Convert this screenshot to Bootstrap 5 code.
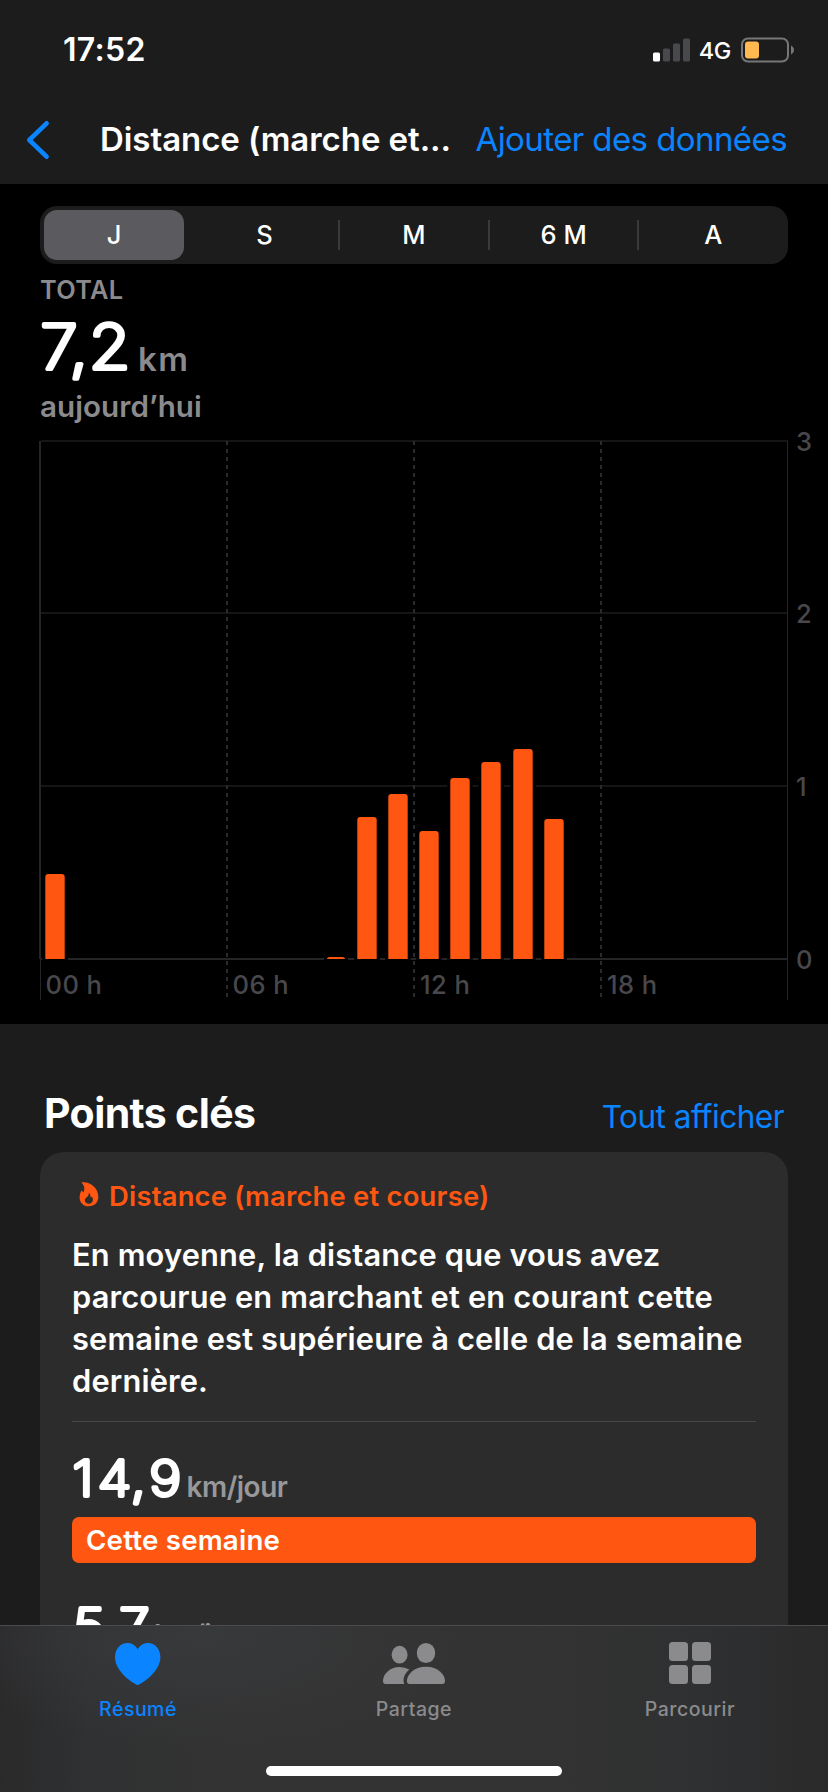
<!DOCTYPE html>
<html lang="fr" data-bs-theme="dark">
<head>
<meta charset="utf-8">
<meta name="viewport" content="width=device-width, initial-scale=1">
<title>Distance (marche et course)</title>
<link href="https://cdn.jsdelivr.net/npm/bootstrap@5.3.0/dist/css/bootstrap.min.css" rel="stylesheet">
<style>
  body { font-family: Inter, "Liberation Sans", sans-serif; background: #1c1c1c; color: #fff; }
  svg { display: block; flex: none; }
  .phone { height: 1792px; }
  .ios-blue { color: #0a84ff; }
  .ios-grey { color: #8b8b8d; }
  .semi { font-weight: 600; }
  .status-row { height: 99px; padding: 0 33px 0 63px; }
  .clock { font-size: 32px; font-weight: 600; letter-spacing: .3px; }
  .network { font-size: 23.5px; font-weight: 500; letter-spacing: -.4px; margin: 2px 10px 0 8px; }
  .title-row { height: 85px; padding: 0 41px 3px 26px; font-size: 33px; }
  .page-title { margin-left: 50px; letter-spacing: -.06px; }
  .add-link { letter-spacing: -.58px; }
  .chart-panel { background: #000; padding-top: 22px; }
  .segments { height: 58px; margin: 0 40px; padding: 4px 0; border-radius: 17px; background: #1c1c1c; font-size: 25.5px; font-weight: 500; }
  .segment { flex: 1 1 0; position: relative; }
  .segment.chosen { flex: 0 0 140px; margin: 0 5.6px 0 4px; border-radius: 13px; background: #5b5a5f; }
  .segment.split::before { content: ""; position: absolute; left: -1px; top: 10px; width: 2px; height: 30px; background: #3a3a3d; }
  .total-label { font-size: 25.3px; line-height: 30px; margin: 11px 0 0 40px; letter-spacing: .35px; }
  .day-label { font-size: 29.6px; line-height: 34px; margin-left: 40px; letter-spacing: .05px; }
  .figure-text { fill: #fff; stroke: #fff; font-weight: 200; stroke-linejoin: round; stroke-linecap: round; text-anchor: middle; }
  .unit { font-weight: 600; }
  .axis { fill: #48484c; font-size: 25.5px; font-weight: 500; letter-spacing: .45px; }
  .section-head { padding: 64px 44px 0 44px; height: 128px; }
  .section-head h2 { font-size: 41px; font-weight: 700; line-height: 50px; letter-spacing: -.61px; margin: 0; }
  .section-head a { font-size: 31.5px; letter-spacing: -.5px; }
  .insight { background: #2c2c2c; border-radius: 24px; margin: 0 40px; padding: 28px 32px 0; height: 680px; }
  .insight-title { color: #ff5711; font-size: 27.4px; line-height: 32px; letter-spacing: .22px; }
  .insight-text { font-size: 30.8px; line-height: 42.1px; letter-spacing: .16px; margin: 22px 0 18.6px; white-space: nowrap; }
  .rule { height: 1px; background: #48484b; }
  .week-bar { height: 46px; border-radius: 7px; background: #ff5711; font-size: 27.7px; letter-spacing: .2px; padding-left: 14px; line-height: 47px; }
  .tabs { height: 167px; border-top: 1px solid #4b4b4d; padding-top: 16px;
    background: radial-gradient(ellipse 260px 110px at 200px 10px, #38393b, transparent), linear-gradient(90deg, #2a2a2b 0, #303132 90px, #333 230px, #333 540px, #2f3031 700px, #2a2a2b 828px); }
  .tab-name { font-size: 19.5px; font-weight: 500; line-height: 24px; margin-top: 11px; letter-spacing: .5px; }
  .home-bar { width: 296px; height: 10px; border-radius: 5px; background: #fff; margin-top: 45px; }
</style>
</head>
<body>
<div class="phone position-relative overflow-hidden">
  <header>
    <div class="status-row d-flex align-items-center justify-content-between">
      <span class="clock">17:52</span>
      <div class="d-flex align-items-center">
        <svg width="38" height="24" viewBox="653 37.5 38 24">
          <g fill="#48494c"><rect x="663" y="48" width="7" height="13" rx="1.5"/><rect x="673" y="43" width="7" height="18" rx="1.5"/><rect x="683" y="38" width="7" height="23" rx="1.5"/></g>
          <rect x="653" y="52" width="7" height="9" rx="1.5" fill="#fff"/>
        </svg>
        <span class="network">4G</span>
        <svg width="54" height="26" viewBox="741 36.5 54 26">
          <rect x="742" y="38" width="46" height="23" rx="6" fill="none" stroke="#767678" stroke-width="2"/>
          <rect x="745" y="41" width="14" height="17" rx="3" fill="#ffb950"/>
          <path d="M791 45c4 2 4 7 0 9z" fill="#767678"/>
        </svg>
      </div>
    </div>
    <nav class="title-row d-flex align-items-center">
      <svg width="24" height="40" viewBox="26 120 24 40"><path d="M46.6 123.3 29.3 140 46.6 156.7" fill="none" stroke="#0a84ff" stroke-width="4.6" stroke-linecap="round" stroke-linejoin="round"/></svg>
      <span class="page-title semi">Distance (marche et...</span>
      <a class="add-link ios-blue text-decoration-none ms-auto" href="#">Ajouter des données</a>
    </nav>
  </header>

  <section class="chart-panel">
    <div class="segments d-flex">
      <div class="segment chosen d-flex align-items-center justify-content-center">J</div>
      <div class="segment d-flex align-items-center justify-content-center">S</div>
      <div class="segment split d-flex align-items-center justify-content-center">M</div>
      <div class="segment split d-flex align-items-center justify-content-center">6 M</div>
      <div class="segment split d-flex align-items-center justify-content-center">A</div>
    </div>
    <div class="total-label semi ios-grey">TOTAL</div>
    <svg width="828" height="84" viewBox="0 305 828 84">
      <text class="figure-text" transform="scale(1.1 1)" x="53.6 71.6 99.6" y="369" font-size="61.5" stroke-width="4.2">7,2</text>
      <text class="unit" x="138" y="371" font-size="33" fill="#8b8b8d" letter-spacing="1.5">km</text>
    </svg>
    <div class="day-label semi ios-grey">aujourd’hui</div>
    <svg width="828" height="601" viewBox="0 423 828 601">
      <g fill="#151516"><rect x="41" y="440" width="747" height="2"/><rect x="41" y="612" width="747" height="2"/><rect x="41" y="785" width="747" height="2"/></g>
      <g fill="#252527"><rect x="41" y="958" width="747" height="2"/><rect x="39" y="441" width="2" height="518"/><rect x="40" y="959" width="1" height="41"/><rect x="787" y="441" width="1" height="559"/></g>
      <g stroke="#2b2b2d" stroke-width="2" stroke-dasharray="4 4"><path d="M227 441V998M414 441V998M601 441V998"/></g>
      <g fill="#ff5711" stroke="#000" stroke-width="6" paint-order="stroke">
        <path d="M45.3 959V877q0-3 3-3h13.4q3 0 3 3v82z"/>
        <path d="M327 959q0-2 3-2h12q3 0 3 2z"/>
        <path d="M357.3 959V820q0-3 3-3h13.4q3 0 3 3v139z"/>
        <path d="M388.3 959V797q0-3 3-3h13.4q3 0 3 3v162z"/>
        <path d="M419.3 959V834q0-3 3-3h13.4q3 0 3 3v125z"/>
        <path d="M450.3 959V781q0-3 3-3h13.4q3 0 3 3v178z"/>
        <path d="M481.3 959V765q0-3 3-3h13.4q3 0 3 3v194z"/>
        <path d="M513.3 959V752q0-3 3-3h13.4q3 0 3 3v207z"/>
        <path d="M544.3 959V822q0-3 3-3h13.4q3 0 3 3v137z"/>
      </g>
      <g class="axis">
        <text x="45.5" y="994.3">00 h</text><text x="232.5" y="994.3">06 h</text><text x="420" y="994.3">12 h</text><text x="607" y="994.3">18 h</text>
        <text x="796" y="451">3</text><text x="796" y="623">2</text><text x="796" y="796">1</text><text x="796" y="969">0</text>
      </g>
    </svg>
  </section>

  <section>
    <div class="section-head d-flex align-items-baseline justify-content-between">
      <h2>Points clés</h2>
      <a class="ios-blue text-decoration-none" href="#">Tout afficher</a>
    </div>
    <div class="insight">
      <div class="insight-title semi d-flex">
        <svg width="37" height="32" viewBox="72 1180 37 32">
          <path fill="#ff5711" fill-rule="evenodd" d="M81.3 1182.6C88.5 1181 98.3 1187 98.3 1197C98.3 1202.700 94.300 1206.200 88.800 1206.200C83.300 1206.200 79.600 1202.600 79.600 1197.400C79.600 1194.500 80.500 1192.200 81.800 1190.200C82.200 1191.300 82.700 1192 83.500 1192.400C84.500 1189.800 84.700 1187.700 83.700 1185.800C83.200 1184.700 82.400 1183.700 81.300 1182.600ZM88.700 1192.700C89.100 1194.800 88 1196.200 86.700 1197.200C85.500 1198.100 84.900 1199.100 84.900 1200.200C84.900 1202.300 86.600 1203.700 88.800 1203.700C91.200 1203.700 92.900 1202.200 92.900 1199.800C92.900 1198.500 92.500 1197.400 91.800 1196.500C91.500 1197.200 91.100 1197.500 90.500 1197.600C90.800 1195.600 90.300 1193.900 88.700 1192.700Z"/>
        </svg>
        <span>Distance (marche et course)</span>
      </div>
      <p class="insight-text semi">En moyenne, la distance que vous avez<br>parcourue en marchant et en courant cette<br>semaine est supérieure à celle de la semaine<br>dernière.</p>
      <div class="rule"></div>
      <svg width="684" height="95" viewBox="72 1422 684 95">
        <text class="figure-text" transform="scale(1.12 1)" x="74.1 102.2 123.6 147.6" y="1496.200" font-size="49" stroke-width="3.900">14,9</text>
        <text class="unit" x="186.500" y="1497" font-size="28" fill="#98989a" letter-spacing="-.5">km/jour</text>
      </svg>
      <div class="week-bar semi">Cette semaine</div>
      <svg width="684" height="100" viewBox="72 1563 684 100">
        <text class="figure-text" transform="scale(1.12 1)" x="79.4 98.2 120" y="1644" font-size="49" stroke-width="3.900">5,7</text>
        <text class="unit" x="154" y="1645" font-size="28" fill="#98989a" letter-spacing="-.5">km/jour</text>
      </svg>
    </div>
  </section>

  <nav class="tabs position-absolute bottom-0 start-0 w-100">
    <div class="row g-0 text-center">
      <div class="col-4 d-flex flex-column align-items-center ios-blue">
        <svg width="46" height="44" viewBox="114 1642 46 44"><path fill="#0a84ff" d="M136.700 1685C134.800 1685 114 1672.500 114 1657.200C114 1649 119.500 1643 126.400 1643C131 1643 134.800 1645.500 136.700 1649.300C138.600 1645.500 142.400 1643 147 1643C153.900 1643 159.400 1649 159.400 1657.200C159.400 1672.500 138.600 1685 136.700 1685Z"/></svg>
        <span class="tab-name">Résumé</span>
      </div>
      <div class="col-4 d-flex flex-column align-items-center ios-grey">
        <svg width="64" height="44" viewBox="381 1642 64 44" fill="#8b8b8d">
          <ellipse cx="398.600" cy="1654.700" rx="8" ry="8.900"/>
          <ellipse cx="425" cy="1653" rx="9.200" ry="10.100"/>
          <path d="M384.500 1684Q382 1684 382 1681C382 1674 389 1667 398.500 1667Q404 1667 408.300 1669.500C404.500 1672.500 402.500 1676.500 402.500 1680.500Q402.500 1682.500 403.500 1684Z"/>
          <path d="M408.500 1684Q405.900 1684 405.900 1681C405.900 1674.500 413 1666.700 425 1666.700S444 1674.500 444 1681Q444 1684 441.400 1684Z"/>
        </svg>
        <span class="tab-name">Partage</span>
      </div>
      <div class="col-4 d-flex flex-column align-items-center ios-grey">
        <svg width="42" height="44" viewBox="668 1642 42 44" fill="#8b8b8d"><rect x="668" y="1642" width="19" height="19" rx="3.500"/><rect x="691" y="1642" width="19" height="19" rx="3.500"/><rect x="668" y="1665" width="19" height="19" rx="3.500"/><rect x="691" y="1665" width="19" height="19" rx="3.500"/></svg>
        <span class="tab-name">Parcourir</span>
      </div>
    </div>
    <div class="home-bar mx-auto"></div>
  </nav>
</div>
<script src="https://cdn.jsdelivr.net/npm/bootstrap@5.3.0/dist/js/bootstrap.bundle.min.js"></script>
</body>
</html>
